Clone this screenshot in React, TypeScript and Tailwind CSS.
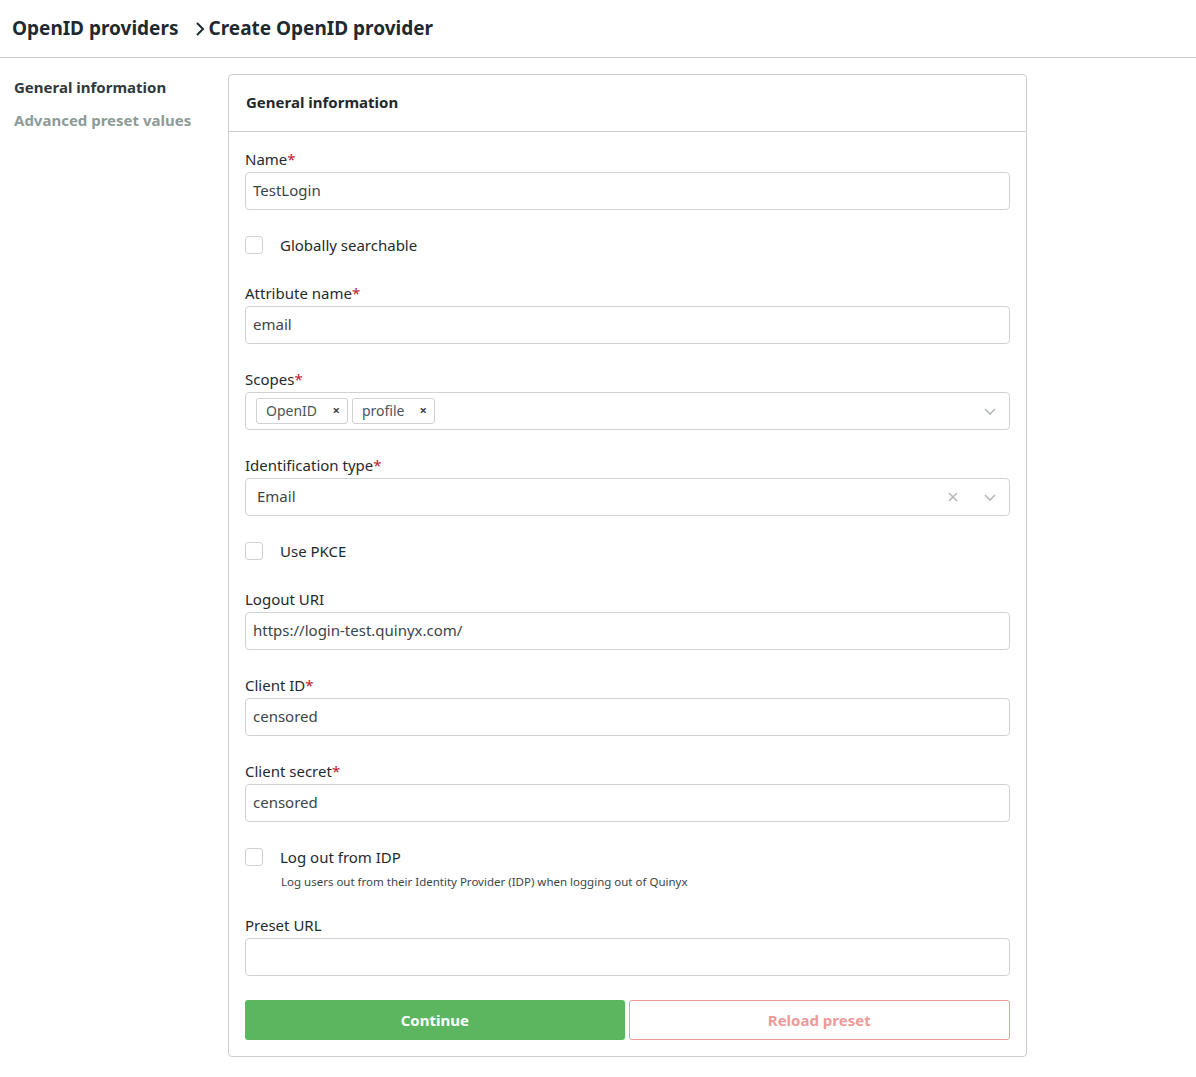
import React from 'react';

const font = { fontFamily: '"Noto Sans", Lato, sans-serif' };

function Label({ text, required }: { text: string; required?: boolean }) {
  return (
    <div className="h-[22px] text-[15px] leading-[22px] text-[#1f2a2e]">
      {text}
      {required && <span className="text-[#c5162e]">*</span>}
    </div>
  );
}

function TextField({ label, value, required, first }: { label: string; value: string; required?: boolean; first?: boolean }) {
  return (
    <div className={first ? '' : 'mt-[24px]'}>
      <Label text={label} required={required} />
      <div className="mt-[2px] flex h-[38px] items-center rounded-[4px] border border-[#cfd4d3] px-[7px] pb-[2px] text-[15px] text-[#3a4548]">
        {value}
      </div>
    </div>
  );
}

function Check({ label }: { label: string }) {
  return (
    <div className="mt-[24px] flex h-[22px] items-center">
      <div className="h-[18px] w-[18px] rounded-[3px] border border-[#cfd4d3] bg-white" />
      <span className="ml-[17px] text-[15px] text-[#1f2a2e]">{label}</span>
    </div>
  );
}

function Chevron() {
  return (
    <svg width="14" height="14" viewBox="0 0 14 14" className="text-[#b5b9b9]">
      <path d="M2 5l5 5 5-5" fill="none" stroke="currentColor" strokeWidth="1.6" />
    </svg>
  );
}

function Tag({ text, w }: { text: string; w: string }) {
  return (
    <div className={`flex h-[26px] items-center justify-between rounded-[3px] border border-[#cfd4d3] pb-[1px] pl-[9px] pr-[7px] text-[14px] text-[#4a5558] ${w}`}>
      <span>{text}</span>
      <span className="text-[13px] font-bold text-[#3a4548]">×</span>
    </div>
  );
}

export default function App() {
  return (
    <div className="min-h-[1077px] bg-white" style={font}>
      <header className="flex h-[58px] items-center border-b border-[#c9cfcf] pl-[12px] text-[19px] font-bold text-[#1f2a2e]">
        <span>OpenID providers</span>
        <svg width="10" height="16" viewBox="0 0 10 16" className="ml-[16px] mr-[4px]">
          <path d="M2 2l6 6-6 6" fill="none" stroke="#1f2a2e" strokeWidth="2" />
        </svg>
        <span>Create OpenID provider</span>
      </header>

      <div className="flex pt-[16px]">
        <nav className="w-[228px] shrink-0 pl-[14px] pt-[2px] text-[15px] font-bold">
          <div className="leading-[22px] text-[#2e3a3e]">General information</div>
          <div className="mt-[11px] leading-[22px] text-[#8d9b99]">Advanced preset values</div>
        </nav>

        <section className="w-[799px] rounded-[4px] border border-[#c9cfcf]">
          <div className="flex h-[57px] items-center border-b border-[#c9cfcf] px-[17px] pb-[2px] text-[15px] font-bold text-[#1f2a2e]">
            General information
          </div>
          <div className="px-[16px] pb-[16px] pt-[16px]">
            <TextField first label="Name" required value="TestLogin" />
            <Check label="Globally searchable" />
            <div className="mt-[26px]">
              <Label text="Attribute name" required />
              <div className="mt-[2px] flex h-[38px] items-center rounded-[4px] border border-[#cfd4d3] px-[7px] pb-[2px] text-[15px] text-[#3a4548]">
                email
              </div>
            </div>

            <div className="mt-[24px]">
              <Label text="Scopes" required />
              <div className="mt-[2px] flex h-[38px] items-center rounded-[4px] border border-[#cfd4d3] pl-[10px] pr-[12px]">
                <div className="flex flex-1 gap-[4px]">
                  <Tag text="OpenID" w="w-[92px]" />
                  <Tag text="profile" w="w-[83px]" />
                </div>
                <Chevron />
              </div>
            </div>

            <div className="mt-[24px]">
              <Label text="Identification type" required />
              <div className="mt-[2px] flex h-[38px] items-center rounded-[4px] border border-[#cfd4d3] pl-[11px] pr-[12px] text-[15px] text-[#3a4548]">
                <span className="flex-1 pb-[2px]">Email</span>
                <svg width="12" height="12" viewBox="0 0 12 12" className="mr-[24px]">
                  <path d="M2 2l8 8M10 2l-8 8" stroke="#b5b9b9" strokeWidth="1.6" />
                </svg>
                <Chevron />
              </div>
            </div>

            <Check label="Use PKCE" />
            <div className="mt-[26px]">
              <Label text="Logout URI" />
              <div className="mt-[2px] flex h-[38px] items-center rounded-[4px] border border-[#cfd4d3] px-[7px] pb-[2px] text-[15px] text-[#3a4548]">
                https://login-test.quinyx.com/
              </div>
            </div>
            <TextField label="Client ID" required value="censored" />
            <TextField label="Client secret" required value="censored" />

            <Check label="Log out from IDP" />
            <div className="ml-[36px] mt-[6px] text-[11.5px] leading-[16px] text-[#3a4548]">
              Log users out from their Identity Provider (IDP) when logging out of Quinyx
            </div>

            <TextField label="Preset URL" value="" />

            <div className="mt-[24px] flex gap-[4px]">
              <button className="h-[40px] flex-1 rounded-[3px] bg-[#5cb660] text-[15px] font-bold text-white">
                Continue
              </button>
              <button className="h-[40px] flex-1 rounded-[3px] border border-[#ee9a9a] bg-white text-[15px] font-bold text-[#ef9a9a]">
                Reload preset
              </button>
            </div>
          </div>
        </section>
      </div>
    </div>
  );
}
